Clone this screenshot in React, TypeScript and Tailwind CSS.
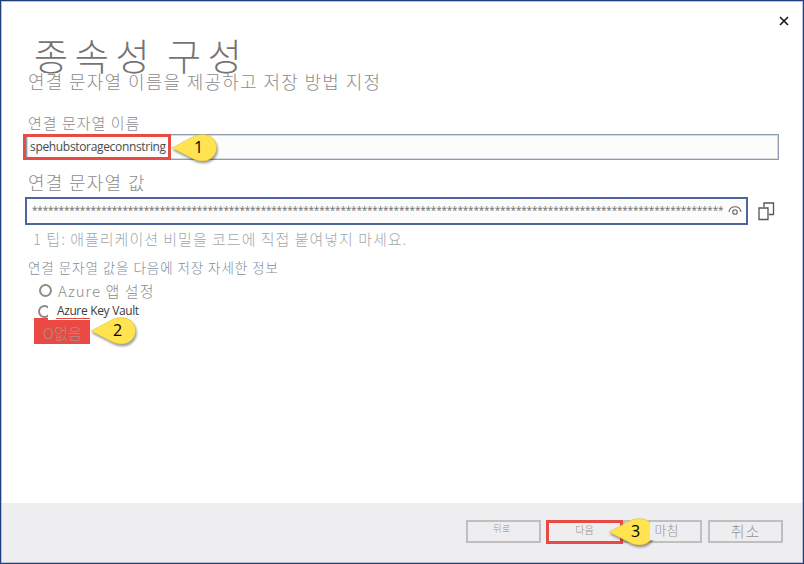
import type { ReactNode } from 'react';

const KR = "font-['Noto_Sans_CJK_KR',sans-serif] whitespace-nowrap leading-none";
const LATIN = "font-['Open_Sans','Noto_Sans',sans-serif] whitespace-nowrap leading-none";

function Row({ className, children }: { className: string; children?: ReactNode }) {
  return <div className={`flex shrink-0 items-center ${className}`}>{children}</div>;
}

function Callout({ n, className }: { n: string; className: string }) {
  return (
    <div className={`absolute z-10 h-8 w-12 ${className}`}>
      <svg width="48" height="32" viewBox="0 0 48 32" className="absolute inset-0 overflow-visible drop-shadow-[1px_2px_1px_rgba(0,0,0,0.4)]">
        <path d="M0 14 L20 3.2 C24 1.2 27 .6 30.5 .6 C38.5 .6 44.5 6 44.5 13.6 C44.5 21.5 38.5 27 30.5 27 C26 27 23.5 26 20 24.2 Z" fill="#ffe34f" stroke="#d8bd3e" strokeWidth=".5" />
      </svg>
      <span className={`absolute left-[22px] top-[5px] text-[16px] text-black ${LATIN}`}>{n}</span>
    </div>
  );
}

function FooterButton({ label, className, textClass }: { label: string; className: string; textClass: string }) {
  return (
    <button className={`flex h-[23px] justify-center border-2 border-[#bfbfc0] text-[#929292] ${className}`}>
      <span className={`${KR} font-light ${textClass}`}>{label}</span>
    </button>
  );
}

export default function App() {
  return (
    <div className="relative flex h-[564px] w-[804px] flex-col overflow-hidden border border-[#203f7e] bg-white">
      <div className="flex h-[502px] flex-col border border-b-0 border-[#b9c3dc]">
        <Row className="mt-[13px] h-[12px] justify-end pr-[13px]">
          <svg width="10" height="10" viewBox="0 0 10 10" stroke="#161616" strokeWidth="1.6"><path d="M1 1l8 8M9 1L1 9" /></svg>
        </Row>
        <Row className="mt-[12px] h-[32px] pl-[32px]">
          <h1 className={`${KR} text-[37px] font-light tracking-[6.7px] [word-spacing:-4px] text-[#747474]`}>종속성 구성</h1>
        </Row>
        <Row className="mt-px h-[18px] pl-[26px]">
          <p className={`${KR} text-[18px] font-light tracking-[1.2px] [word-spacing:0.4px] text-[#8c8c8c]`}>연결 문자열 이름을 제공하고 저장 방법 지정</p>
        </Row>
        <Row className="mt-[24px] h-[16px] pl-[26px]">
          <label className={`${KR} text-[15px] font-light tracking-[1px] text-[#8c8c8c]`}>연결 문자열 이름</label>
        </Row>
        <div className="relative ml-[24px] mt-[4px] flex h-[26px] w-[753px] shrink-0 items-center border border-[#8d9bae] bg-[#fcfcfc] shadow-[inset_0_0_0_1px_#d3dae2]">
          <div className="-ml-[4px] flex h-[26px] w-[148px] shrink-0 items-center border-[3px] border-[#e84b43] pl-[4px]">
            <span className={`${LATIN} text-[12px] tracking-[-0.33px] text-[#4b4b4b]`}>spehubstorageconnstring</span>
          </div>
          <Callout n="1" className="left-[145px] top-[-1px]" />
        </div>
        <Row className="mt-[13px] h-[18px] pl-[26px]">
          <label className={`${KR} text-[18px] font-light tracking-[1.2px] [word-spacing:0.4px] text-[#8c8c8c]`}>연결 문자열 값</label>
        </Row>
        <div className="mt-[6px] flex shrink-0 items-center pl-[23px]">
          <div className="flex h-[28px] w-[723px] items-center justify-between border-2 border-[#4c659c] bg-[#fcfcfc] pl-[5px] pr-[4px]">
            <span className={`${LATIN} mb-[2px] w-[692px] text-[10px] tracking-[-0.19px] text-[#6b6b6b]`}>{'*'.repeat(130)}</span>
            <svg width="14" height="12" viewBox="0 0 14 12" fill="none" stroke="#666" strokeWidth="1.1"><path d="M1 7C2 0 12 0 13 7" /><circle cx="7" cy="7" r="2.3" /></svg>
          </div>
          <svg className="ml-[10px]" width="17" height="19" viewBox="0 0 17 19" fill="none" stroke="#555" strokeWidth="1.3"><path d="M6 5V1h9.5v11.5H11" /><path d="M1 6h9v11.5H1z" /></svg>
        </div>
        <Row className="mt-[5px] h-[16px] pl-[31px]">
          <p className={`${KR} text-[15px] font-light tracking-[1px] text-[#a0a9ae]`}>1 팁: 애플리케이션 비밀을 코드에 직접 붙여넣지 마세요.</p>
        </Row>
        <Row className="mt-[14px] h-[16px] pl-[26px]">
          <p className={`${KR} text-[13.5px] font-light tracking-[0.95px] text-[#7f8d99]`}>연결 문자열 값을 다음에 저장 자세한 정보</p>
        </Row>
        <Row className="mt-[6px] h-[16px] pl-[37px]">
          <span className="size-[13px] rounded-full border-2 border-[#8c8c8c]" />
          <span className={`${KR} ml-[6px] text-[15px] font-light tracking-[1.1px] text-[#8c8c8c]`}>Azure 앱 설정</span>
        </Row>
        <Row className="mt-[6px] h-[14px] pl-[36px]">
          <span className="h-[13px] w-[10px] overflow-hidden"><span className="block size-[13px] rounded-full border-2 border-[#8c8c8c]" /></span>
          <span className={`${LATIN} ml-[9px] text-[12px] tracking-[-0.4px] [word-spacing:0.3px] text-[#3c3c3c]`}>Azure Key Vault</span>
        </Row>
        <div className="relative ml-[32px] flex h-[26px] w-[56px] shrink-0 items-center bg-[#ea4a43] pl-[9px]">
          <span className="absolute left-[14px] top-0 h-[2px] w-[42px] bg-white" />
          <span className="absolute left-[22px] top-0 h-px w-[34px] bg-[#e84b43]" />
          <span className={`${KR} mt-[2px] text-[15px] font-light tracking-[0.3px] text-[#ac9186]`}>O없음</span>
          <Callout n="2" className="left-[57px] top-[-1px]" />
        </div>
      </div>
      <footer className="flex h-[60px] items-start border-x border-b border-[#b9bfd0] bg-[#eeeef0] pl-[464px] pt-[17px]">
        <FooterButton label="뒤로" className="w-[75px]" textClass="-ml-[3px] pt-[2px] text-[9px] tracking-[0.5px]" />
        <div className="relative ml-[5px] flex h-[24px] w-[77px] justify-center border-[3px] border-[#e84b43] text-[#929292]">
          <span className={`${KR} pt-[2px] text-[10px] font-light`}>다음</span>
          <Callout n="3" className="left-[60px] top-[-5px]" />
        </div>
        <FooterButton label="마침" className="w-[79px]" textClass="relative z-20 ml-[3px] h-[18px] bg-[#eeeef0] pl-[5px] pt-[1px] text-[13px]" />
        <FooterButton label="취소" className="ml-[6px] w-[75px]" textClass="pt-[1px] text-[15px] tracking-[1px]" />
      </footer>
    </div>
  );
}
